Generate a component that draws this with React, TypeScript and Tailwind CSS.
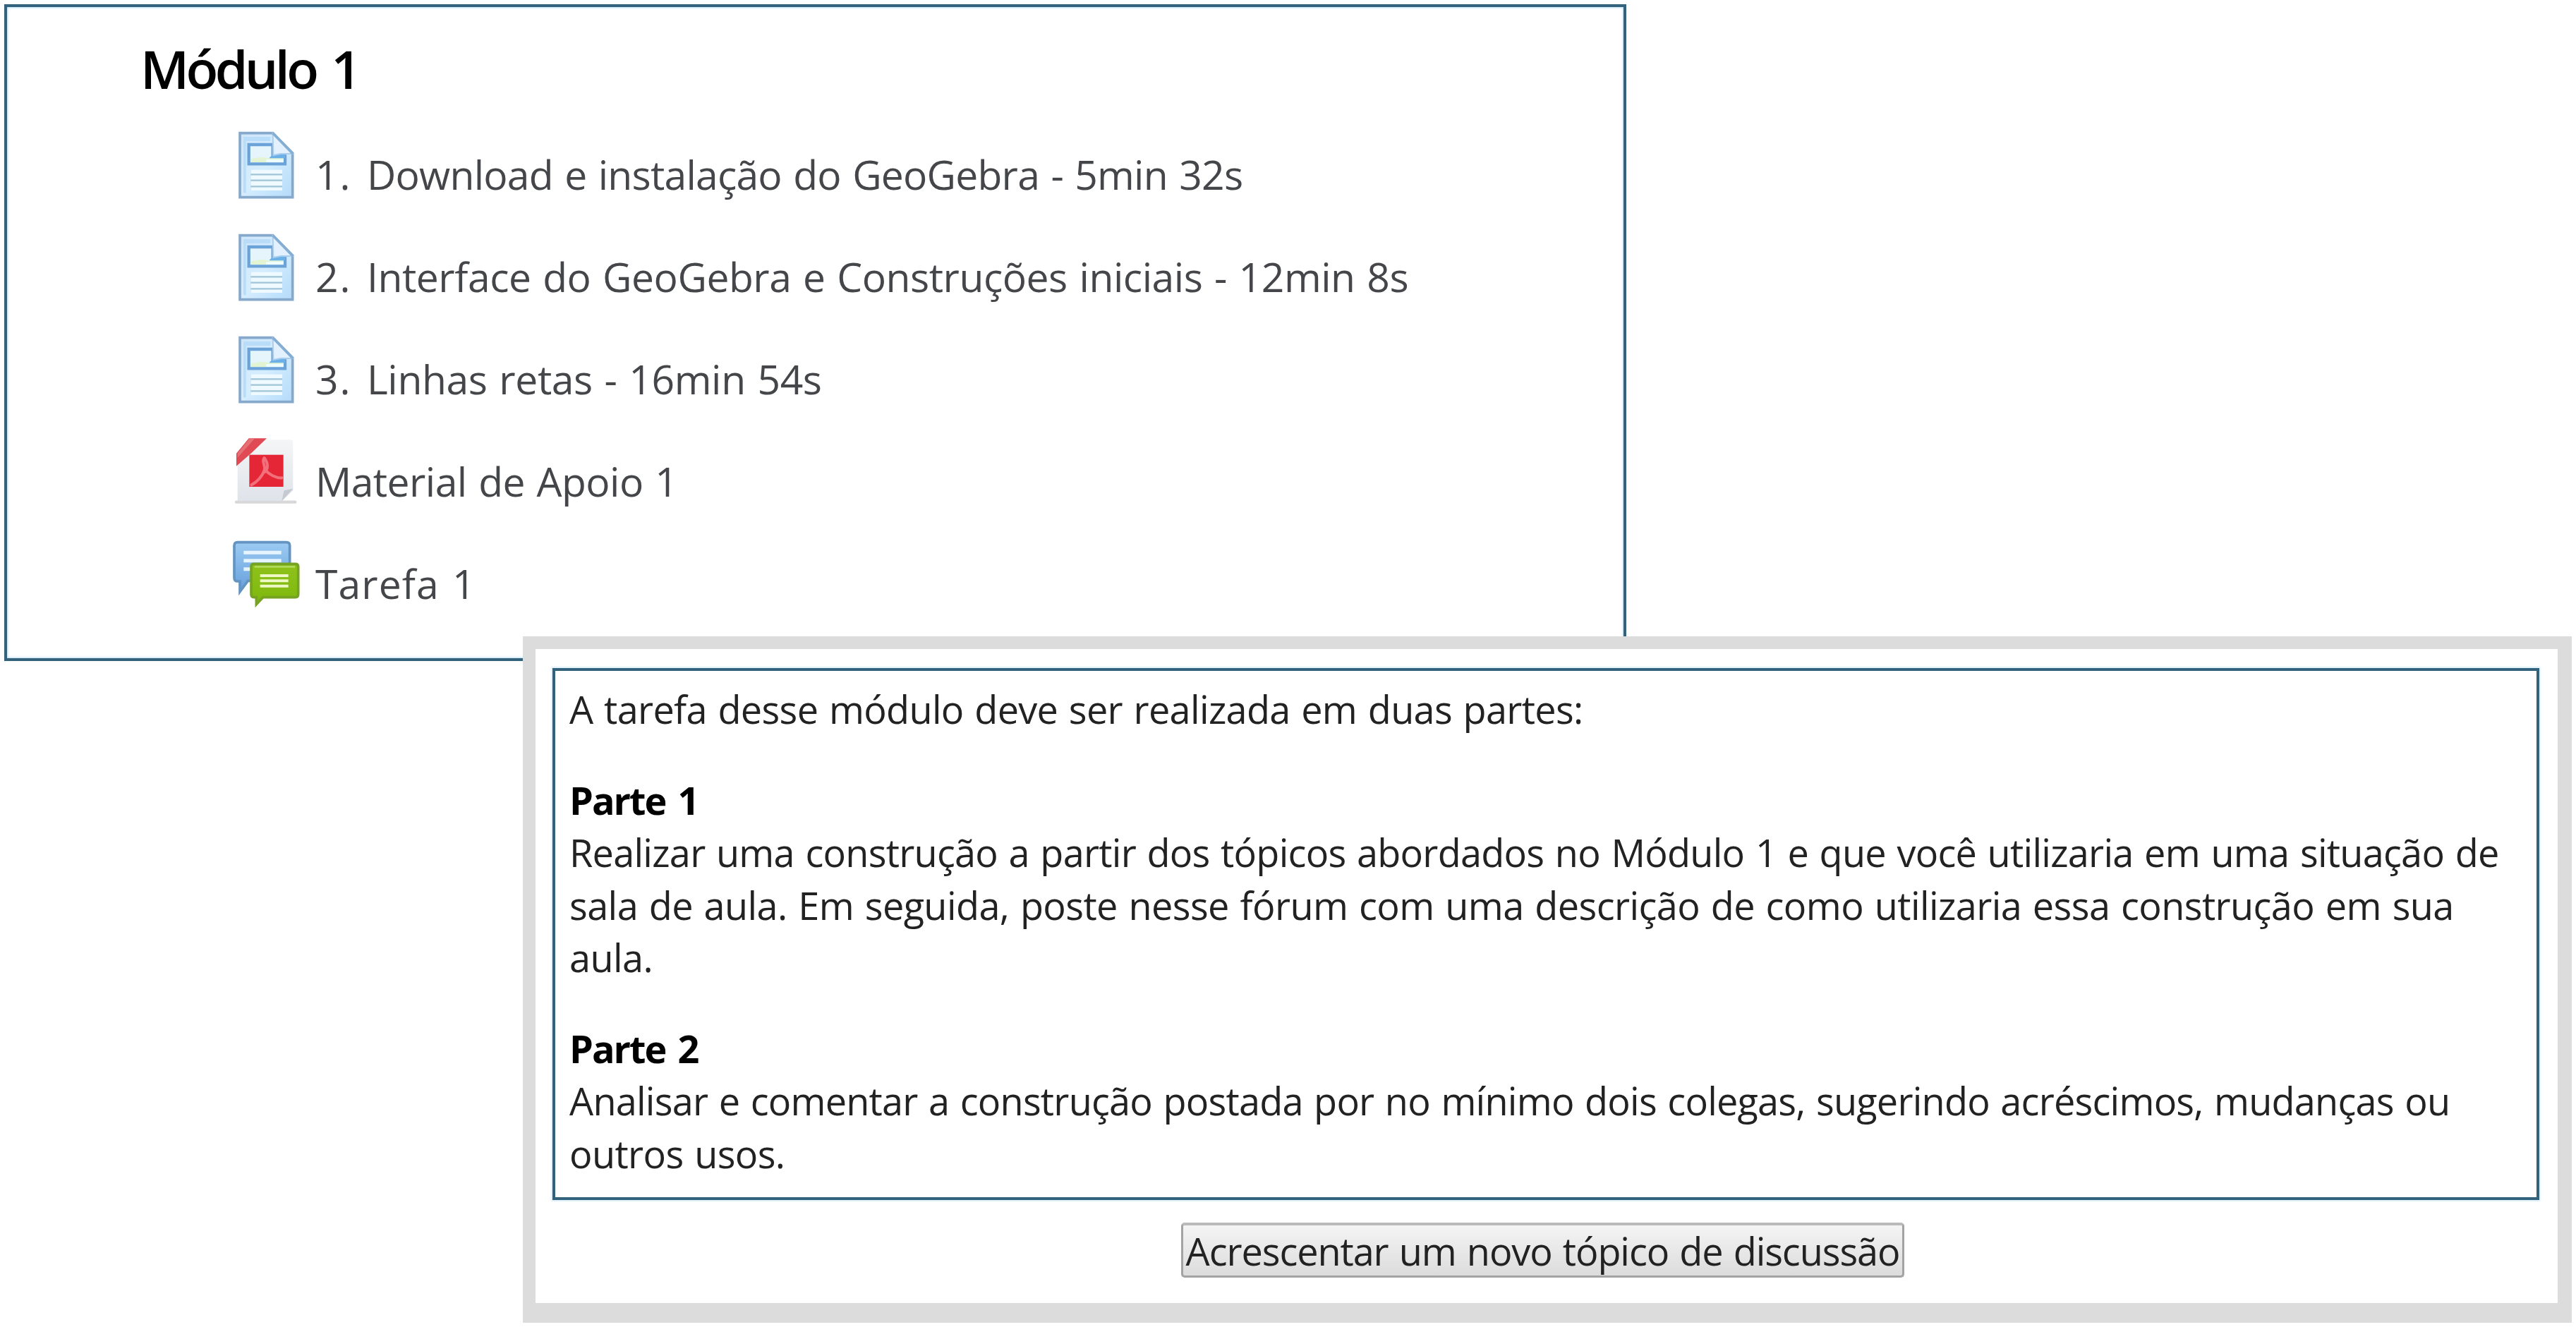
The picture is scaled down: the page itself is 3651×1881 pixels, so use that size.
import type { ReactNode } from "react";

// Page resource icon (blue sheet with folded corner)
const PageIcon = () => (
  <svg className="h-[130px] w-[120px] shrink-0" viewBox="0 0 360 390">
    <defs>
      <linearGradient id="sheet" x1="0" y1="0" x2="1" y2="1">
        <stop offset="0" stopColor="#cfe6fa" />
        <stop offset="0.5" stopColor="#d5edff" />
        <stop offset="1" stopColor="#b4dbfa" />
      </linearGradient>
    </defs>
    <path d="M60 56H200L284 142V329H60Z" fill="url(#sheet)" stroke="#86a9cb" strokeWidth="11" />
    <path d="M75 72H190V90H86V310H75Z" fill="#b9dcf8" />
    <rect x="108" y="212" width="132" height="88" fill="#eefaff" />
    <path d="M106 232H240M106 257H240M106 283H240" stroke="#a0c5d8" strokeWidth="7" />
    <path d="M98 105H200V150L252 154V187H98Z" fill="#e6f4fc" stroke="#6ba3d8" strokeWidth="13" />
    <path d="M106 180V166L150 158L190 163H245V180Z" fill="#e3f4d4" />
    <path d="M172 180V168H245V180Z" fill="#eefdff" />
    <path d="M186 160L202 146L252 146V163H186Z" fill="#6bb1e8" />
    <path d="M200 58L282 144H234L202 150Z" fill="#e2f1fd" stroke="#a9cdee" strokeWidth="6" />
    <path d="M200 56L286 144" stroke="#85aed4" strokeWidth="11" />
  </svg>
);

const PdfIcon = () => (
  <svg className="h-[130px] w-[120px] shrink-0" viewBox="0 15 360 390">
    <defs>
      <linearGradient id="paper" x1="0" y1="0" x2="0" y2="1">
        <stop offset="0" stopColor="#f4f6f6" />
        <stop offset="1" stopColor="#dfe3ea" />
      </linearGradient>
    </defs>
    <path d="M45 335H295" stroke="#d8d8da" strokeWidth="13" strokeLinecap="round" />
    <path d="M165 70H276Q286 70 286 82V285L240 330H50V165Z" fill="url(#paper)" />
    <path d="M286 278L238 331L248 286Z" fill="#c5cad1" />
    <path d="M45 128L98 64H174L112 124L45 182Z" fill="#df4a54" />
    <path d="M50 128L100 66H122L50 146Z" fill="#e57177" />
    <rect x="100" y="134" width="145" height="136" fill="#e52637" />
    <path
      d="M163 147C151 166 170 176 164 200C155 227 130 252 109 262M168 199C183 216 212 234 240 232M164 208C180 198 182 172 165 148"
      fill="none"
      stroke="#f2707c"
      strokeWidth="12"
      strokeLinecap="round"
    />
  </svg>
);

// Two speech bubbles, blue behind green
const ForumIcon = () => (
  <svg className="h-[130px] w-[120px] shrink-0" viewBox="0 0 360 390">
    <defs>
      <linearGradient id="blue" x1="0" y1="0" x2="0" y2="1">
        <stop offset="0" stopColor="#9ccbf2" />
        <stop offset="1" stopColor="#659fdc" />
      </linearGradient>
      <linearGradient id="green" x1="0" y1="0" x2="0" y2="1">
        <stop offset="0" stopColor="#8fc21c" />
        <stop offset="1" stopColor="#7db80c" />
      </linearGradient>
    </defs>
    <path
      d="M50 56H258Q272 56 272 70V206Q272 220 258 220H94L60 266V222H50Q36 222 36 206V70Q36 56 50 56Z"
      fill="url(#blue)"
      stroke="#6494c2"
      strokeWidth="11"
    />
    <path d="M76 100H236M76 134H236M76 170H130" stroke="#e6f4ff" strokeWidth="15" />
    <path
      d="M120 148H296Q308 148 308 160V276Q308 290 296 290H158L130 320V290H120Q108 290 108 276V160Q108 148 120 148Z"
      fill="url(#green)"
      stroke="#76a322"
      strokeWidth="11"
    />
    <path d="M122 160H294" stroke="#b1d95a" strokeWidth="8" />
    <path d="M146 198H266M146 220H266M146 242H266" stroke="#eef8c4" strokeWidth="12" />
  </svg>
);

interface ActivityProps {
  icon: ReactNode;
  number?: string;
  className: string;
  children: ReactNode;
}

const Activity = ({ icon, number, className, children }: ActivityProps) => (
  <li className="flex h-[145px] items-start">
    {icon}
    <a className="ml-[7px] flex pt-[27px] text-[57px] leading-[100px] whitespace-nowrap text-[#444649] [word-spacing:2.3px]">
      {number && <span className="w-[73px] tracking-[2px]">{number}</span>}
      <span className={className}>{children}</span>
    </a>
  </li>
);

const App = () => {
  return (
    <div className="relative h-[1881px] w-[3651px] overflow-hidden bg-white pt-[6px] pl-[6px] font-['Open_Sans',sans-serif]">
      {/* Course section */}
      <section className="h-[931px] w-[2299px] border-4 border-[#33627d] shadow-[inset_0_0_3px_1px_#b5dcf2]">
        <h2 className="h-[160px] pt-[12px] pl-[189px] text-[75px] leading-[150px] font-semibold tracking-[-4.6px] text-black [word-spacing:7px]">
          Módulo 1
        </h2>
        <ul className="pl-[310px]">
          <Activity icon={<PageIcon />} number="1." className="tracking-[-0.77px]">
            Download e instalação do GeoGebra - 5min 32s
          </Activity>
          <Activity icon={<PageIcon />} number="2." className="tracking-[-0.46px]">
            Interface do GeoGebra e Construções iniciais - 12min 8s
          </Activity>
          <Activity icon={<PageIcon />} number="3." className="tracking-[-0.38px]">
            Linhas retas - 16min 54s
          </Activity>
          <Activity icon={<PdfIcon />} className="tracking-[-0.55px]">
            Material de Apoio 1
          </Activity>
          <Activity icon={<ForumIcon />} className="tracking-[1.1px]">
            Tarefa 1
          </Activity>
        </ul>
      </section>

      {/* Forum window on top of the section */}
      <section className="absolute top-[902px] left-[741px] flex h-[973px] w-[2904px] flex-col border-t-[18px] border-r-[20px] border-b-[28px] border-l-[18px] border-[#dbdcdb] bg-white pt-[27px] pl-6">
        <div className="h-[754px] w-[2816px] border-4 border-[#33627d] pt-[17px] pl-[20px] text-[54px] leading-[74.5px] whitespace-nowrap text-[#222222] shadow-[0_0_3px_1px_#c5e4f5] [word-spacing:2.2px]">
          <p className="tracking-[-0.66px]">A tarefa desse módulo deve ser realizada em duas partes:</p>
          <div className="mt-[54px]">
            <h3 className="font-bold tracking-[-2px] text-black [word-spacing:5px]">Parte 1</h3>
            <p className="tracking-[-0.73px]">
              Realizar uma construção a partir dos tópicos abordados no Módulo 1 e que você utilizaria em uma situação de
            </p>
            <p className="tracking-[-0.58px]">
              sala de aula. Em seguida, poste nesse fórum com uma descrição de como utilizaria essa construção em sua
            </p>
            <p className="tracking-[-0.58px]">aula.</p>
          </div>
          <div className="mt-[54px]">
            <h3 className="font-bold tracking-[-2px] text-black [word-spacing:5px]">Parte 2</h3>
            <p className="tracking-[-0.77px]">
              Analisar e comentar a construção postada por no mínimo dois colegas, sugerindo acréscimos, mudanças ou
            </p>
            <p className="tracking-[-0.6px]">outros usos.</p>
          </div>
        </div>
        <button className="mt-8 ml-[891px] flex h-[78px] w-[1025px] items-center justify-center rounded-[5px] border-[3px] border-t-4 border-[#a3a3a3] border-t-[#bababa] bg-linear-to-b from-[#f4f4f4] to-[#dcdcdc] text-[54px] leading-none tracking-[-1.07px] whitespace-nowrap text-[#222222] [word-spacing:2.2px]">
          Acrescentar um novo tópico de discussão
        </button>
      </section>
    </div>
  );
};

export default App;
